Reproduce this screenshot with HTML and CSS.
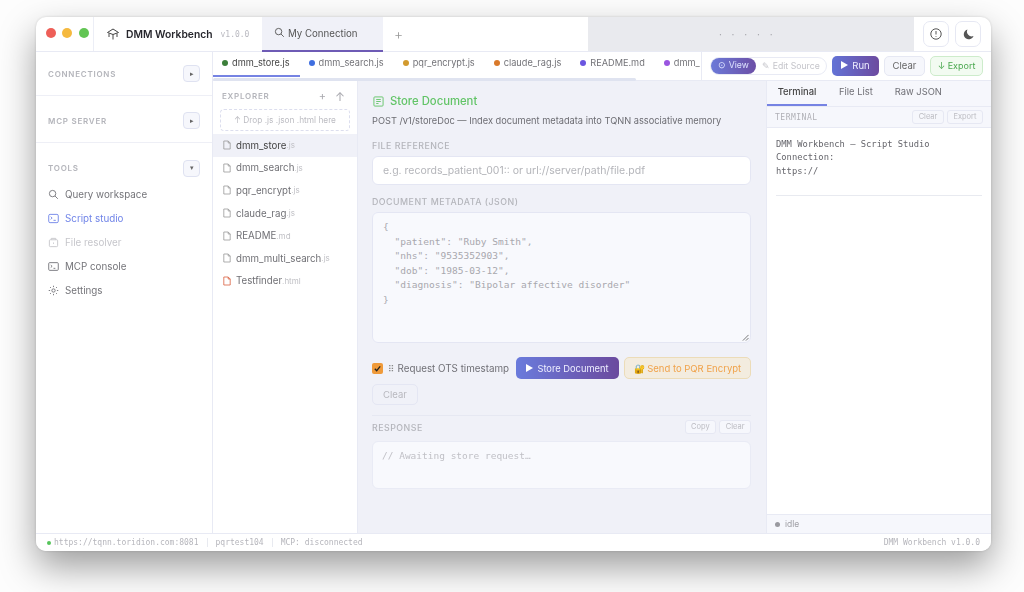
FILE: index.html
```html
<!DOCTYPE html>
<html lang="en">
<head>
<meta charset="utf-8">
<title>DMM Workbench</title>
<link rel="stylesheet" href="styles.css">
</head>
<body>
<div class="window">
  <header class="titlebar">
    <div class="lights"><i class="light red"></i><i class="light amber"></i><i class="light green"></i></div>
    <div class="brand">
      <svg class="brand-icon" viewBox="0 0 14 14"><path d="M1.500 5.500 7 2l5.500 3.500L7 7.500z"/><path d="M3 6.500v3.500M11 6.500v3.500M7 7.500V12.500"/></svg>
      <span class="brand-name">DMM Workbench</span><span class="brand-ver">v1.0.0</span>
    </div>
    <div class="conn-tab">
      <svg class="ic-search" viewBox="0 0 12 12"><circle cx="5" cy="5" r="3.500"/><path d="m7.700 7.700 3 3"/></svg>
      <span>My Connection</span>
    </div>
    <div class="add-tab">+</div>
    <div class="drag">· · · · ·</div>
    <div class="title-actions">
      <button class="square-btn"><svg viewBox="0 0 14 14"><circle cx="7" cy="7" r="5.200"/><path d="M7 4v3.500M7 9.300v.7"/></svg></button>
      <button class="square-btn"><svg viewBox="0 0 14 14"><path class="fill" d="M6.500 2.500a5 5 0 1 0 6 6.500 4.700 4.700 0 0 1-6-6.500z"/></svg></button>
    </div>
  </header>

  <div class="body">
    <aside class="sidebar">
      <section class="side-sec sec-conn"><span class="sec-title">CONNECTIONS</span><button class="toggle">▸</button></section>
      <section class="side-sec sec-mcp"><span class="sec-title">MCP SERVER</span><button class="toggle">▸</button></section>
      <section class="side-sec sec-tools"><span class="sec-title">TOOLS</span><button class="toggle">▾</button></section>
      <nav class="nav">
        <a class="nav-item"><svg viewBox="0 0 12 12"><circle cx="5" cy="5" r="3.500"/><path d="m7.700 7.700 3 3"/></svg>Query workspace</a>
        <a class="nav-item active"><svg viewBox="0 0 12 12"><rect x=".8" y="1.500" width="10.400" height="9" rx="1.500"/><path d="m3 4 1.500 1.500L3 7M6 8h2.500"/></svg>Script studio</a>
        <a class="nav-item muted"><svg viewBox="0 0 12 12"><rect x="1.500" y="3" width="9" height="7.500" rx="1"/><path d="M3.500 3V1.500h5V3M6 6v1.500"/></svg>File resolver</a>
        <a class="nav-item"><svg viewBox="0 0 12 12"><rect x=".8" y="1.800" width="10.400" height="8.400" rx="1"/><path d="m3 4.500 1.500 1.300L3 7.100M6 8h2"/></svg>MCP console</a>
        <a class="nav-item"><svg viewBox="0 0 12 12"><circle cx="6" cy="6" r="1.800"/><path d="M6 .8v1.500M6 9.700v1.500M.8 6h1.500M9.700 6h1.500M2.300 2.300l1 1M8.700 8.700l1 1M2.300 9.700l1-1M8.700 3.300l1-1"/></svg>Settings</a>
      </nav>
    </aside>

    <div class="studio">
      <div class="topbar">
        <div class="file-tabs">
          <div class="file-tab current"><i class="dot d-green"></i>dmm_store.js</div>
          <div class="file-tab"><i class="dot d-blue"></i>dmm_search.js</div>
          <div class="file-tab"><i class="dot d-gold"></i>pqr_encrypt.js</div>
          <div class="file-tab"><i class="dot d-orange"></i>claude_rag.js</div>
          <div class="file-tab"><i class="dot d-violet"></i>README.md</div>
          <div class="file-tab"><i class="dot d-purple"></i>dmm_</div>
          <div class="scroll-thumb"></div>
        </div>
        <div class="toolbar">
          <div class="seg"><span class="seg-on">⊙ View</span><span class="seg-off">✎ Edit Source</span></div>
          <button class="btn-run"><span class="tri"></span>Run</button>
          <button class="btn-clear">Clear</button>
          <button class="btn-export">↓ Export</button>
        </div>
      </div>

      <div class="panes">
        <div class="explorer">
          <div class="exp-head"><span class="sec-title">EXPLORER</span><span class="exp-actions"><span>+</span><span class="exp-up">↑</span></span></div>
          <div class="drop">↑ Drop .js .json .html here</div>
          <ul class="files">
            <li class="file selected"><svg viewBox="0 0 10 12"><path d="M1 1h5.500L9 3.500V11H1z"/><path d="M6.500 1v2.500H9"/></svg>dmm_store<small>.js</small></li>
            <li class="file"><svg viewBox="0 0 10 12"><path d="M1 1h5.500L9 3.500V11H1z"/><path d="M6.500 1v2.500H9"/></svg>dmm_search<small>.js</small></li>
            <li class="file"><svg viewBox="0 0 10 12"><path d="M1 1h5.500L9 3.500V11H1z"/><path d="M6.500 1v2.500H9"/></svg>pqr_encrypt<small>.js</small></li>
            <li class="file"><svg viewBox="0 0 10 12"><path d="M1 1h5.500L9 3.500V11H1z"/><path d="M6.500 1v2.500H9"/></svg>claude_rag<small>.js</small></li>
            <li class="file"><svg viewBox="0 0 10 12"><path d="M1 1h5.500L9 3.500V11H1z"/><path d="M6.500 1v2.500H9"/></svg>README<small>.md</small></li>
            <li class="file"><svg viewBox="0 0 10 12"><path d="M1 1h5.500L9 3.500V11H1z"/><path d="M6.500 1v2.500H9"/></svg>dmm_multi_search<small>.js</small></li>
            <li class="file html"><svg viewBox="0 0 10 12"><path d="M1 1h5.500L9 3.500V11H1z"/><path d="M6.500 1v2.500H9"/></svg>Testfinder<small>.html</small></li>
          </ul>
        </div>

        <main class="main">
          <h1 class="doc-title"><svg viewBox="0 0 12 12"><rect x="1" y="1" width="10" height="10" rx="1"/><path d="M3.500 3.800h5M3.500 6h5M3.500 8.200h2.500"/></svg>Store Document</h1>
          <p class="doc-sub">POST /v1/storeDoc — Index document metadata into TQNN associative memory</p>
          <label class="field-label">FILE REFERENCE</label>
          <div class="input">e.g. records_patient_001:: or url://server/path/file.pdf</div>
          <label class="field-label second">DOCUMENT METADATA (JSON)</label>
          <pre class="textarea">{
  "patient": "Ruby Smith",
  "nhs": "9535352903",
  "dob": "1985-03-12",
  "diagnosis": "Bipolar affective disorder"
}<svg class="grip" viewBox="0 0 8 8"><path d="M7.500 1 1 7.500M7.500 4.500l-3 3"/></svg></pre>
          <div class="actions">
            <span class="check"><svg viewBox="0 0 10 10"><path d="m2 5.200 2.100 2.200L8 2.600"/></svg></span>
            <span class="check-label"><i class="ots">⠿</i>Request OTS timestamp</span>
            <button class="btn-store"><span class="tri"></span>Store Document</button>
            <button class="btn-pqr"><span class="lock">🔐</span>Send to PQR Encrypt</button>
          </div>
          <button class="btn-ghost">Clear</button>
          <div class="resp-head"><span class="field-label flat">RESPONSE</span><span class="mini-group"><button class="mini">Copy</button><button class="mini">Clear</button></span></div>
          <div class="response">// Awaiting store request…</div>
        </main>

        <aside class="right">
          <div class="r-tabs"><span class="r-tab current">Terminal</span><span class="r-tab">File List</span><span class="r-tab">Raw JSON</span></div>
          <div class="r-sub"><span class="r-label">TERMINAL</span><span class="mini-group"><button class="mini">Clear</button><button class="mini">Export</button></span></div>
          <div class="term">
            <div class="term-text">DMM Workbench — Script Studio
Connection:
https://</div>
            <hr class="term-rule">
          </div>
          <div class="r-foot"><i class="idle-dot"></i>idle</div>
        </aside>
      </div>
    </div>
  </div>

  <footer class="status">
    <i class="ok-dot"></i><span>https://tqnn.toridion.com:8081</span><i class="sep"></i><span>pqrtest104</span><i class="sep"></i><span>MCP: disconnected</span>
    <span class="status-right">DMM Workbench v1.0.0</span>
  </footer>
</div>
</body>
</html>
```
FILE: styles.css
```css
* { box-sizing: border-box; }
html, body { margin: 0; height: 100%; }
body { background: #fdfdfd; font-family: Inter, "Liberation Sans", sans-serif; overflow: hidden; color: #555; }
button { font-family: inherit; padding: 0; cursor: default; }
i { font-style: normal; }
svg { fill: none; stroke: currentColor; stroke-width: 1; flex: none; }

.window { width: 955px; height: 534px; margin: 17px 0 0 36px; background: #fff; border-radius: 10px; overflow: hidden; display: flex; flex-direction: column; box-shadow: 0 16px 36px rgba(0,0,0,.38), 0 0 3px rgba(0,0,0,.15); filter: blur(.3px); }

.titlebar { height: 35px; display: flex; flex: none; border-bottom: 1px solid #e8eaf4; }
.lights { width: 58px; display: flex; align-items: center; gap: 6.300px; padding: 0 0 2px 10px; border-right: 1px solid #eceef6; }
.light { width: 10px; height: 10px; border-radius: 50%; }
.red { background: #ee5f58; }
.amber { background: #f5b93f; }
.green { background: #62c554; }
.brand { width: 168px; display: flex; align-items: center; padding-left: 12px; }
.brand-icon { width: 14px; height: 14px; color: #444; margin-right: 6px; }
.brand-name { font-size: 10.300px; font-weight: 600; color: #26262c; }
.brand-ver { font: 8px "DejaVu Sans Mono", monospace; color: #b9b9c0; margin-left: 8px; }
.conn-tab { width: 121px; display: flex; align-items: center; gap: 3px; padding-left: 12px; background: #f0f1f8; border-bottom: 2px solid #6e5bb5; margin-bottom: -1px; font-size: 9.700px; color: #555; }
.ic-search { width: 11px; height: 11px; margin-top: -3px; }
.add-tab { width: 205px; padding: 8px 0 0 11px; font-size: 14px; font-weight: 300; color: #999; }
.drag { flex: 1; background: #e9eaee; color: #a0a0a6; font-size: 10px; text-align: center; line-height: 34px; letter-spacing: 3.500px; padding-right: 7px; }
.title-actions { width: 77px; display: flex; align-items: center; gap: 6px; padding-left: 9px; }
.square-btn { width: 26px; height: 26px; border-radius: 7px; border: 1px solid #e6e8f3; background: #fff; display: flex; align-items: center; justify-content: center; color: #555; }
.square-btn svg { width: 14px; height: 14px; }
.square-btn .fill { fill: #555; stroke: none; }

.body { flex: 1; display: flex; min-height: 0; }
.sidebar { width: 177px; flex: none; border-right: 1px solid #e8eaf4; }
.side-sec { display: flex; align-items: center; justify-content: space-between; padding: 0 12px; }
.sec-conn { height: 44px; border-bottom: 1px solid #eeeff6; }
.sec-mcp { height: 47px; padding-top: 3px; border-bottom: 1px solid #eeeff6; }
.sec-tools { height: 39px; padding-top: 11px; }
.sec-title { font-size: 8px; font-weight: 600; letter-spacing: .75px; color: #b4b5bb; }
.toggle { width: 17px; height: 17px; border-radius: 4px; border: 1px solid #dfe2f1; background: #f6f7fc; color: #666; font-size: 7px; line-height: 14px; }
.nav { display: flex; flex-direction: column; }
.nav-item { height: 24px; display: flex; align-items: center; padding-left: 12px; gap: 6px; font-size: 9.800px; color: #747479; }
.nav-item svg { width: 11px; height: 11px; }
.nav-item.active { color: #7084e8; }
.nav-item.muted { color: #c6c6cb; }

.studio { flex: 1; min-width: 0; display: flex; flex-direction: column; }
.topbar { height: 29px; flex: none; display: flex; background: #fff; border-bottom: 1px solid #e8eaf4; }
.file-tabs { position: relative; flex: 1; min-width: 0; display: flex; border-right: 1px solid #e8eaf4; }
.file-tab { height: 25px; display: flex; align-items: center; gap: 4px; padding: 0 10px 4px 9px; font-size: 9.200px; color: #737378; white-space: nowrap; flex: none; }
.file-tab.current { color: #444; padding-bottom: 2px; border-bottom: 2px solid #7683e3; }
.dot { width: 6px; height: 6px; border-radius: 50%; }
.d-green { background: #3c7f3a; }
.d-blue { background: #3f6fe0; }
.d-gold { background: #d29a2e; }
.d-orange { background: #d9792a; }
.d-violet { background: #6a55e0; }
.d-purple { background: #9a55e0; }
.scroll-thumb { position: absolute; left: 0; top: 26px; width: 423px; height: 3px; border-radius: 2px; background: #dfe3f0; }
.toolbar { width: 289px; flex: none; display: flex; align-items: center; gap: 5px; padding: 0 8px; height: 27px; }
.seg { display: flex; align-items: center; width: 117px; height: 18px; border: 1px solid #e8eaf4; border-radius: 9px; font-size: 8.700px; }
.seg-on { width: 45px; height: 16px; line-height: 15px; text-align: center; color: #dfe3ff; border-radius: 8px; background: linear-gradient(90deg, #6b79d8, #6c4fa6); }
.seg-off { flex: 1; text-align: center; color: #c4c4ca; }
.tri { display: inline-block; width: 0; height: 0; border-left: 7px solid #fff; border-top: 4.500px solid transparent; border-bottom: 4.500px solid transparent; margin-right: 4px; }
.btn-run { width: 47px; height: 20px; border: 0; border-radius: 5px; color: #eef; background: linear-gradient(90deg, #6373d6, #6c4a9f); font-size: 9.500px; }
.btn-clear { width: 41px; height: 20px; border: 1px solid #e6e8f3; border-radius: 5px; background: #f6f7fc; color: #666; font-size: 9.500px; }
.btn-export { width: 53px; height: 20px; border: 1px solid #cdeccb; border-radius: 5px; background: #f2fbf1; color: #4aa84f; font-size: 9px; }

.panes { flex: 1; min-height: 0; display: flex; }
.explorer { width: 145px; flex: none; background: #fff; border-right: 1px solid #e8eaf4; }
.exp-head { height: 28px; display: flex; align-items: center; justify-content: space-between; padding: 2px 12px 0 9px; }
.exp-actions { display: flex; gap: 9px; font-size: 11px; color: #a8a8ae; }
.exp-up { font-size: 12px; }
.drop { margin: 0 7px; height: 22px; border: 1px dashed #dcdeee; border-radius: 4px; text-align: center; font-size: 8.300px; line-height: 20px; color: #bcbcc2; }
.files { list-style: none; margin: 3px 0 0; padding: 0; }
.file { height: 22.600px; display: flex; align-items: center; padding-left: 10px; font-size: 9.700px; color: #707075; }
.file svg { width: 8px; height: 10px; margin-right: 5px; color: #999; }
.file small { font-size: 8px; color: #c0c0c5; }
.file.selected { background: #f0f1f8; color: #444; }
.file.html svg { color: #d9603f; }

.main { flex: 1; min-width: 0; background: #f0f1f8; padding: 13px 15px 0 14px; }
.doc-title { display: flex; align-items: center; gap: 6px; margin: 0; padding-left: 1px; font-size: 11.300px; line-height: 14px; font-weight: 500; color: #62c467; }
.doc-title svg { width: 11px; height: 11px; }
.doc-sub { margin: 6px 0 0; font-size: 9.250px; line-height: 14px; color: #6c6c72; white-space: nowrap; }
.field-label { display: block; margin-top: 12px; font-size: 8.800px; line-height: 11px; font-weight: 500; letter-spacing: .5px; color: #b4b5bb; }
.field-label.second { margin-top: 11px; }
.field-label.flat { margin: 0; }
.input { height: 29px; margin-top: 5px; padding-left: 10px; background: #fff; border: 1px solid #e4e6f3; border-radius: 6px; font-size: 10.500px; line-height: 27px; color: #b4b5ba; }
.textarea { position: relative; height: 131px; margin: 5px 0 0; padding: 7px 10px; background: #f8f9fd; border: 1px solid #e4e6f3; border-radius: 6px; font: 9.560px/14.500px "DejaVu Sans Mono", monospace; color: #a8a8ae; }
.grip { position: absolute; right: 1px; bottom: 1px; width: 7px; height: 7px; color: #666; }
.actions { display: flex; align-items: center; margin-top: 14px; height: 22px; }
.check { width: 11px; height: 11px; border-radius: 2px; background: #ef9a3a; display: flex; align-items: center; justify-content: center; color: #222; margin-right: 5px; }
.check svg { width: 9px; height: 9px; stroke-width: 1.500; }
.check-label { font-size: 9.800px; color: #707076; width: 128px; white-space: nowrap; }
.ots { font: 9px "DejaVu Sans", sans-serif; margin-right: 3px; color: #888; }
.btn-store { width: 104px; height: 22px; border: 0; border-radius: 5px; color: #eef; background: linear-gradient(90deg, #6a7bdc, #6b4a9e); font-size: 9.300px; }
.btn-pqr { width: 127px; height: 22px; margin-left: 5px; border: 1px solid #ecdcb8; border-radius: 5px; background: #f3ecdf; color: #f0a24a; font-size: 9.500px; white-space: nowrap; }
.lock { font-size: 9px; margin-right: 2px; }
.btn-ghost { display: block; width: 46px; height: 21px; margin-top: 5px; border: 1px solid #e4e6f3; border-radius: 5px; background: #f0f1f8; color: #b8b8be; font-size: 9.500px; }
.resp-head { display: flex; align-items: center; justify-content: space-between; margin-top: 10px; height: 23px; border-top: 1px solid #e6e8f2; }
.mini-group { display: flex; gap: 3px; }
.mini { height: 14px; padding: 0 5.500px; border: 1px solid #e6e8f3; border-radius: 3px; background: #f6f7fc; color: #bcbcc2; font-size: 7.500px; line-height: 12px; }
.response { height: 48px; margin-top: 3px; padding: 7px 9px; background: #f8f9fd; border: 1px solid #e9ebf5; border-radius: 6px; font: 9.500px/14px "DejaVu Sans Mono", monospace; color: #c0c0c6; }

.right { width: 225px; flex: none; display: flex; flex-direction: column; border-left: 1px solid #e8eaf4; background: #fff; }
.r-tabs { height: 25px; flex: none; display: flex; background: #f6f7fc; }
.r-tab { padding: 0 11px; font-size: 9.400px; line-height: 22px; color: #707076; }
.r-tab.current { width: 60px; padding: 0; text-align: center; font-weight: 500; color: #444; height: 25px; border-bottom: 2px solid #7683e3; }
.r-tab:nth-child(2) { padding-left: 12px; }
.r-sub { height: 22px; flex: none; display: flex; align-items: center; justify-content: space-between; padding: 0 8px; background: #f6f7fc; border-top: 1px solid #e8eaf4; border-bottom: 1px solid #e8eaf4; }
.r-label { font: 8px "DejaVu Sans Mono", monospace; letter-spacing: .5px; color: #b0b0b6; }
.term { flex: 1; padding: 10px 9px 0; }
.term-text { white-space: pre-line; font: 8.800px/13.400px "DejaVu Sans Mono", monospace; color: #66666c; }
.term-rule { height: 1px; border: 0; margin: 17px 0 0; background: #e8eaf0; }
.r-foot { height: 19px; flex: none; display: flex; align-items: center; gap: 5px; padding-left: 8px; background: #f6f7fc; border-top: 1px solid #e8eaf4; font-size: 8.500px; color: #a0a0a6; }
.idle-dot { width: 5px; height: 5px; border-radius: 50%; background: #9a9aa0; }

.status { height: 18px; flex: none; display: flex; align-items: center; padding: 0 11px; border-top: 1px solid #e8eaf4; font: 8px "DejaVu Sans Mono", monospace; color: #b6b6bc; background: #fff; }
.ok-dot { width: 4px; height: 4px; border-radius: 50%; background: #55c45a; margin-right: 3px; }
.sep { width: 1px; height: 9px; background: #e8eaf0; margin: 0 8px; }
.status-right { margin-left: auto; }
```
